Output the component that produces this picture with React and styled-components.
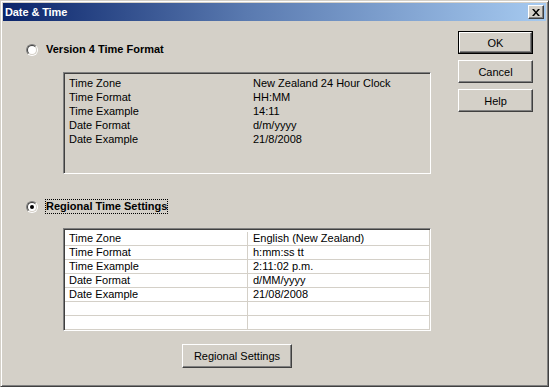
import React from "react";
import styled, { createGlobalStyle } from "styled-components";

const Global = createGlobalStyle`
  html, body { margin: 0; padding: 0; background: #d4d0c8; }
  body { font-family: "Liberation Sans", Arial, sans-serif; font-size: 11px; color: #000; }
`;

const Window = styled.div`
  box-sizing: border-box;
  width: 549px;
  height: 387px;
  background: #d4d0c8;
  border: 1px solid;
  border-color: #d4d0c8 #404040 #404040 #d4d0c8;
  box-shadow: inset 1px 1px #ffffff, inset -1px -1px #808080;
  padding: 2px;
  display: flex;
  flex-direction: column;
`;

const TitleBar = styled.div`
  height: 18px;
  flex: none;
  background: linear-gradient(90deg, #0a246a 0%, #5a7ab0 45%, #a6caf0 100%);
  display: flex;
  align-items: center;
  justify-content: space-between;
  padding: 0 2px 0 2px;
`;

const Title = styled.span`
  color: #fff;
  font-weight: bold;
  font-size: 11px;
  letter-spacing: -0.1px;
`;

const CloseBtn = styled.div`
  box-sizing: border-box;
  width: 16px;
  height: 14px;
  background: #d4d0c8;
  border: 1px solid;
  border-color: #ffffff #404040 #404040 #ffffff;
  box-shadow: inset -1px -1px #808080;
  display: flex;
  align-items: center;
  justify-content: center;
`;

const Body = styled.div`
  flex: 1;
  display: flex;
  padding: 1px 0 0 0;
`;

const Left = styled.div`
  box-sizing: border-box;
  width: 440px;
  flex: none;
  display: flex;
  flex-direction: column;
  padding: 20px 0 0 23px;
`;

const OptionRow = styled.div`
  display: flex;
  align-items: center;
  height: 15px;
  gap: 7px;
  margin-top: ${(p) => p.$mt || 0}px;
`;

const RadioOuter = styled.div`
  box-sizing: border-box;
  width: 12px;
  height: 12px;
  border-radius: 50%;
  border: 1px solid;
  border-color: #808080 #ffffff #ffffff #808080;
  flex: none;
`;

const RadioInner = styled.div`
  box-sizing: border-box;
  width: 10px;
  height: 10px;
  border-radius: 50%;
  border: 1px solid;
  border-color: #404040 #d4d0c8 #d4d0c8 #404040;
  background: #fff;
  display: flex;
  align-items: center;
  justify-content: center;
`;

const Dot = styled.div`
  width: 4px;
  height: 4px;
  border-radius: 50%;
  background: #000;
`;

const OptionLabel = styled.span`
  font-weight: bold;
  font-size: 11px;
  padding: 1px 1px;
  line-height: 13px;
  outline: ${(p) => (p.$focus ? "1px dotted #000" : "none")};
  outline-offset: -1px;
`;

const Panel = styled.div`
  box-sizing: border-box;
  width: 368px;
  height: ${(p) => p.$h}px;
  margin: ${(p) => p.$mt}px 0 0 37px;
  border: 1px solid;
  border-color: #808080 #ffffff #ffffff #808080;
  box-shadow: inset 1px 1px #404040, inset -1px -1px #d4d0c8;
  background: ${(p) => (p.$white ? "#ffffff" : "#d4d0c8")};
  padding: ${(p) => (p.$white ? "3px 1px 1px 1px" : "4px 1px 1px 1px")};
  display: flex;
  flex-direction: column;
  overflow: hidden;
`;

const Row = styled.div`
  display: grid;
  grid-template-columns: 182px 1fr;
  height: ${(p) => (p.$grid ? 13 : 14)}px;
  border-bottom: ${(p) => (p.$grid ? "1px solid #d4d0c8" : "none")};
  flex: none;
`;

const Cell = styled.div`
  line-height: 13px;
  padding-left: ${(p) => (p.$second ? 5 : 4)}px;
  white-space: nowrap;
  border-left: ${(p) => (p.$second && p.$grid ? "1px solid #d4d0c8" : p.$second ? "1px solid transparent" : "none")};
`;

const Button = styled.div`
  box-sizing: border-box;
  width: ${(p) => p.$w || 75}px;
  height: ${(p) => p.$h || 23}px;
  background: #d4d0c8;
  border: 1px solid;
  border-color: #ffffff #404040 #404040 #ffffff;
  box-shadow: inset -1px -1px #808080;
  display: flex;
  align-items: center;
  justify-content: center;
  font-size: 11px;
  flex: none;
`;

const DefaultFrame = styled.div`
  box-sizing: border-box;
  width: 75px;
  height: 23px;
  border: 1px solid #000;
  display: flex;
`;

const BottomButtonWrap = styled.div`
  margin: 13px 0 0 156px;
`;

const Right = styled.div`
  display: flex;
  flex-direction: column;
  gap: 6px;
  padding: 9px 0 0 15px;
`;

const v4 = [
  ["Time Zone", "New Zealand 24 Hour Clock"],
  ["Time Format", "HH:MM"],
  ["Time Example", "14:11"],
  ["Date Format", "d/m/yyyy"],
  ["Date Example", "21/8/2008"],
];

const regional = [
  ["Time Zone", "English (New Zealand)"],
  ["Time Format", "h:mm:ss tt"],
  ["Time Example", "2:11:02 p.m."],
  ["Date Format", "d/MM/yyyy"],
  ["Date Example", "21/08/2008"],
  ["", ""],
  ["", ""],
];

function Radio({ checked }) {
  return (
    <RadioOuter>
      <RadioInner>{checked && <Dot />}</RadioInner>
    </RadioOuter>
  );
}

export default function App() {
  return (
    <>
      <Global />
      <Window>
        <TitleBar>
          <Title>Date &amp; Time</Title>
          <CloseBtn>
            <svg width="8" height="7" viewBox="0 0 8 7">
              <path d="M0 0h2l2 2.5L6 0h2L5 3.5 8 7H6L4 4.5 2 7H0l3-3.5z" fill="#000" />
            </svg>
          </CloseBtn>
        </TitleBar>
        <Body>
          <Left>
            <OptionRow>
              <Radio />
              <OptionLabel>Version 4 Time Format</OptionLabel>
            </OptionRow>
            <Panel $h={102} $mt={15}>
              {v4.map(([a, b]) => (
                <Row key={a}>
                  <Cell>{a}</Cell>
                  <Cell $second>{b}</Cell>
                </Row>
              ))}
            </Panel>
            <OptionRow $mt={25}>
              <Radio checked />
              <OptionLabel $focus>Regional Time Settings</OptionLabel>
            </OptionRow>
            <Panel $h={103} $mt={14} $white>
              {regional.map(([a, b], i) => (
                <Row key={i} $grid>
                  <Cell $grid>{a}</Cell>
                  <Cell $second $grid>{b}</Cell>
                </Row>
              ))}
            </Panel>
            <BottomButtonWrap>
              <Button $w={110} $h={24}>Regional Settings</Button>
            </BottomButtonWrap>
          </Left>
          <Right>
            <DefaultFrame>
              <Button $w={73} $h={21}>OK</Button>
            </DefaultFrame>
            <Button>Cancel</Button>
            <Button>Help</Button>
          </Right>
        </Body>
      </Window>
    </>
  );
}
